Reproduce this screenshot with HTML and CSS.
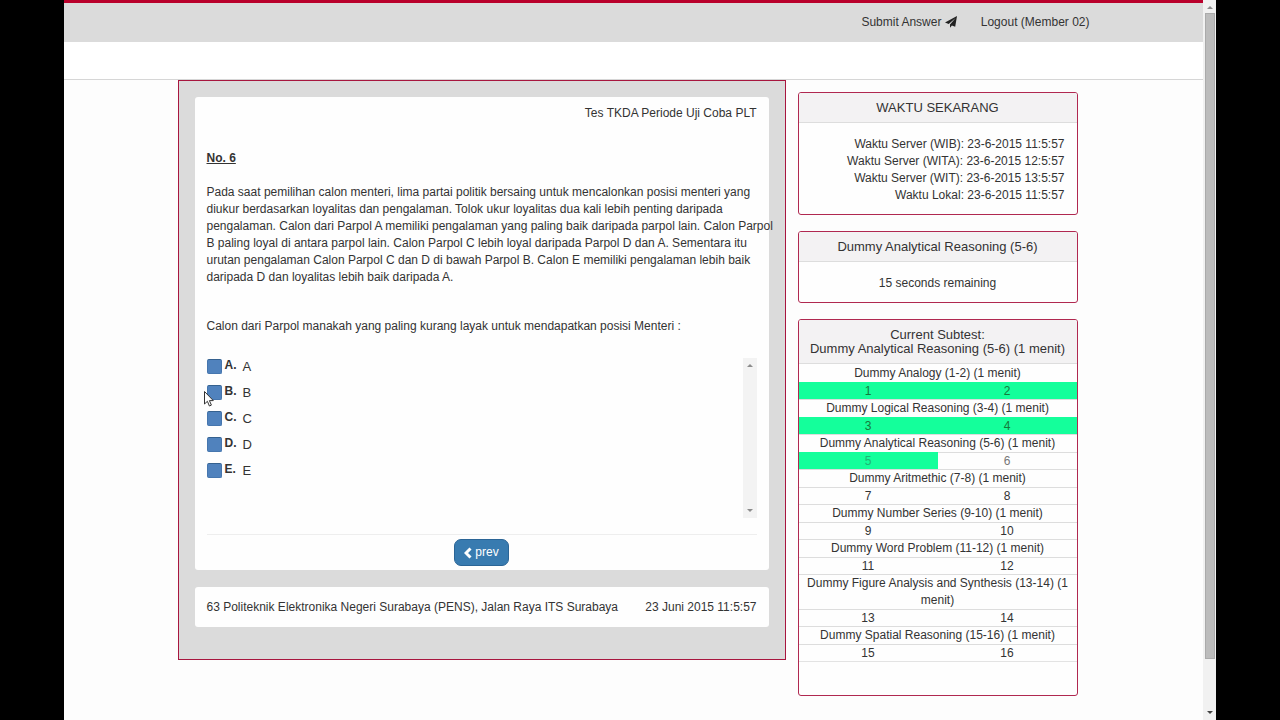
FILE: index.html
```html
<!DOCTYPE html>
<html lang="id">
<head>
<meta charset="utf-8">
<title>Tes TKDA</title>
<link rel="stylesheet" href="styles.css">
</head>
<body>
<div class="screen">
  <div class="page">
    <header class="topbar">
      <nav class="container nav">
        <a class="nav-link" href="#">Submit Answer
          <svg class="icon-plane" viewBox="0 0 12 12" aria-hidden="true"><path d="M12 0 10.2 10.8 6.9 9.4 5 11.8V8.6L10.6 2 3.7 8 0 6.6Z"/></svg>
        </a>
        <a class="nav-link" href="#">Logout (Member 02)</a>
      </nav>
    </header>
    <div class="subbar"></div>
    <div class="container columns">
      <main class="exam">
        <section class="card question">
          <p class="test-name">Tes TKDA Periode Uji Coba PLT</p>
          <h1 class="number">No. 6</h1>
          <p class="passage">Pada saat pemilihan calon menteri, lima partai politik bersaing untuk mencalonkan posisi menteri yang<br>
            diukur berdasarkan loyalitas dan pengalaman. Tolok ukur loyalitas dua kali lebih penting daripada<br>
            pengalaman. Calon dari Parpol A memiliki pengalaman yang paling baik daripada parpol lain. Calon Parpol<br>
            B paling loyal di antara parpol lain. Calon Parpol C lebih loyal daripada Parpol D dan A. Sementara itu<br>
            urutan pengalaman Calon Parpol C dan D di bawah Parpol B. Calon E memiliki pengalaman lebih baik<br>
            daripada D dan loyalitas lebih baik daripada A.</p>
          <p class="prompt" id="prompt">Calon dari Parpol manakah yang paling kurang layak untuk mendapatkan posisi Menteri :</p>
          <div class="answers">
            <div class="options" role="radiogroup" aria-labelledby="prompt">
              <label class="option"><input class="pick" type="radio" name="answer"><b class="letter">A.</b><span class="choice">A</span></label>
              <label class="option"><input class="pick" type="radio" name="answer"><b class="letter">B.</b><span class="choice">B</span>
                <svg class="cursor" viewBox="0 0 10 16" aria-hidden="true"><path d="M.5.5V13L3.4 10.3 5.4 15 7.4 14.1 5.4 9.6H9.3Z"/></svg></label>
              <label class="option"><input class="pick" type="radio" name="answer"><b class="letter">C.</b><span class="choice">C</span></label>
              <label class="option"><input class="pick" type="radio" name="answer"><b class="letter">D.</b><span class="choice">D</span></label>
              <label class="option"><input class="pick" type="radio" name="answer"><b class="letter">E.</b><span class="choice">E</span></label>
            </div>
            <div class="scroller" aria-hidden="true">
              <svg class="arrow" viewBox="0 0 6 3"><path d="M0 3 3 0 6 3Z"/></svg>
              <svg class="arrow" viewBox="0 0 6 3"><path d="M0 0 3 3 6 0Z"/></svg>
            </div>
          </div>
          <div class="actions">
            <button class="prev" type="button"><svg class="icon-prev" viewBox="0 0 8 12" aria-hidden="true"><path d="M6.5 1.5 2 6 6.5 10.5"/></svg>prev</button>
          </div>
        </section>
        <footer class="card info">
          <span>63 Politeknik Elektronika Negeri Surabaya (PENS), Jalan Raya ITS Surabaya</span>
          <span>23 Juni 2015 11:5:57</span>
        </footer>
      </main>
      <aside class="sidebar">
        <section class="panel">
          <h2 class="panel-title">WAKTU SEKARANG</h2>
          <div class="panel-body clocks">
            <div>Waktu Server (WIB): 23-6-2015 11:5:57</div>
            <div>Waktu Server (WITA): 23-6-2015 12:5:57</div>
            <div>Waktu Server (WIT): 23-6-2015 13:5:57</div>
            <div>Waktu Lokal: 23-6-2015 11:5:57</div>
          </div>
        </section>
        <section class="panel">
          <h2 class="panel-title">Dummy Analytical Reasoning (5-6)</h2>
          <div class="panel-body">15 seconds remaining</div>
        </section>
        <section class="panel">
          <h2 class="panel-title">Current Subtest:<br>Dummy Analytical Reasoning (5-6) (1 menit)</h2>
          <table class="subtests">
            <tbody>
              <tr><th colspan="2">Dummy Analogy (1-2) (1 menit)</th></tr>
              <tr><td class="done">1</td><td class="done">2</td></tr>
              <tr><th colspan="2">Dummy Logical Reasoning (3-4) (1 menit)</th></tr>
              <tr><td class="done">3</td><td class="done">4</td></tr>
              <tr><th colspan="2">Dummy Analytical Reasoning (5-6) (1 menit)</th></tr>
              <tr><td class="done last">5</td><td class="current">6</td></tr>
              <tr><th colspan="2">Dummy Aritmethic (7-8) (1 menit)</th></tr>
              <tr><td>7</td><td>8</td></tr>
              <tr><th colspan="2">Dummy Number Series (9-10) (1 menit)</th></tr>
              <tr><td>9</td><td>10</td></tr>
              <tr><th colspan="2">Dummy Word Problem (11-12) (1 menit)</th></tr>
              <tr><td>11</td><td>12</td></tr>
              <tr><th colspan="2">Dummy Figure Analysis and Synthesis (13-14) (1 menit)</th></tr>
              <tr><td>13</td><td>14</td></tr>
              <tr><th colspan="2">Dummy Spatial Reasoning (15-16) (1 menit)</th></tr>
              <tr><td>15</td><td>16</td></tr>
            </tbody>
          </table>
        </section>
      </aside>
    </div>
  </div>
  <div class="page-scroller" aria-hidden="true">
    <svg class="arrow" viewBox="0 0 6 3"><path d="M0 3 3 0 6 3Z"/></svg>
    <div class="thumb"></div>
    <svg class="arrow dark" viewBox="0 0 6 3"><path d="M0 0 3 3 6 0Z"/></svg>
  </div>
</div>
</body>
</html>
```
FILE: styles.css
```css
* { box-sizing: border-box; }

body {
  margin: 0;
  background: #000;
  color: #333;
  font: 12px/17px "Liberation Sans", Arial, sans-serif;
}

h1, h2, p { margin: 0; }

.screen {
  display: flex;
  min-height: 100vh;
  margin: 0 5%;
  background: #fdfdfd;
}

.page { flex: 1; min-width: 0; }

.container {
  max-width: 912px;
  margin: 0 auto;
}

.topbar {
  background: #dbdbdb;
  border-top: 3px solid #b9002b;
}

.nav {
  display: flex;
  justify-content: flex-end;
  gap: 24px;
  padding: 11px 0;
}

.nav-link {
  color: #333;
  text-decoration: none;
}

.icon-plane {
  width: 12px;
  height: 12px;
  vertical-align: -2px;
  fill: #222;
}

.subbar {
  height: 38px;
  background: #fff;
  border-bottom: 1px solid #d6d6d6;
}

.columns {
  display: grid;
  grid-template-columns: minmax(0, 608fr) minmax(0, 280fr);
  gap: 12px;
  align-items: start;
  padding-right: 12px;
}

.exam {
  display: flex;
  flex-direction: column;
  gap: 17px;
  padding: 16px 16px 32px;
  background: #dbdbdb;
  border: 1px solid #a8163f;
}

.card {
  background: #fefefe;
  border-radius: 3px;
  padding: 8px 12px;
}

.question { padding-bottom: 4px; }

.test-name { text-align: right; }

.number {
  margin-top: 28px;
  font-size: 12px;
  text-decoration: underline;
}

.passage {
  margin-top: 17px;
  white-space: nowrap;
}

.prompt { margin-top: 32px; }

.answers {
  display: flex;
  justify-content: space-between;
  min-height: 160px;
  margin-top: 23px;
}

.option {
  position: relative;
  display: flex;
  align-items: center;
  height: 26px;
}

.options { margin-top: -5px; }

.pick {
  appearance: none;
  width: 15px;
  height: 15px;
  margin: 0 3px 0 0;
  background: #5082bd;
  border: 1px solid #4676ae;
  border-top-color: #35618f;
  border-radius: 2px;
}

.letter {
  width: 18px;
  padding-bottom: 2px;
}

.choice { font-size: 13px; }

.cursor {
  position: absolute;
  left: -3px;
  top: 12px;
  width: 10px;
  height: 16px;
  fill: #fff;
  stroke: #333;
}

.scroller {
  display: flex;
  flex-direction: column;
  justify-content: space-between;
  align-items: center;
  width: 14px;
  padding: 6px 0;
  background: #f3f3f3;
}

.arrow {
  width: 6px;
  height: 3px;
  fill: #8c8c8c;
}

.arrow.dark { fill: #444; }

.actions {
  margin-top: 16px;
  padding-top: 4px;
  border-top: 1px solid #eee;
  text-align: center;
}

.prev {
  display: inline-flex;
  align-items: center;
  gap: 3px;
  padding: 4px 9px;
  color: #fff;
  background: #387bb0;
  border: 1px solid #2b6596;
  border-radius: 7px;
  font: inherit;
}

.icon-prev {
  width: 8px;
  height: 12px;
  fill: none;
  stroke: #fff;
  stroke-width: 3;
}

.info {
  display: flex;
  justify-content: space-between;
  padding: 12px 12px 11px;
}

.sidebar {
  display: flex;
  flex-direction: column;
  gap: 16px;
  padding-top: 12px;
}

.panel {
  overflow: hidden;
  background: #fefefe;
  border: 1px solid #b02850;
  border-radius: 3px;
  text-align: center;
}

.panel-title {
  padding: 8px 4px 7px;
  background: #f3f2f3;
  border-bottom: 1px solid #ddd;
  font-size: 13px;
  font-weight: normal;
  line-height: 14px;
}

.panel-body { padding: 13px 12px 10px; }

.clocks { text-align: right; }

.subtests {
  width: 100%;
  margin-bottom: 33px;
  table-layout: fixed;
  border-spacing: 0;
  border-bottom: 1px solid #e3e3e3;
}

.subtests th {
  padding: 0 4px;
  font-weight: normal;
}

.subtests td {
  padding: 0;
  line-height: 16px;
}

.subtests th,
.subtests td { border-top: 1px solid #ddd; }

.subtests tr:first-child th {
  padding-top: 1px;
  border-top: 0;
}

.subtests .done {
  background: #14ff9b;
  border-top-color: #14ff9b;
  color: #157a3a;
}

.subtests .last { color: #1fb573; }

.subtests .current { color: #777; }

.page-scroller {
  display: flex;
  flex-direction: column;
  align-items: center;
  width: 13px;
  padding: 6px 0;
  background: #f1f1f1;
}

.thumb {
  flex: 1;
  width: 10px;
  margin: 4px 0 52px;
  background: #bcbcbc;
  border: 1px solid #aaa;
}
```
